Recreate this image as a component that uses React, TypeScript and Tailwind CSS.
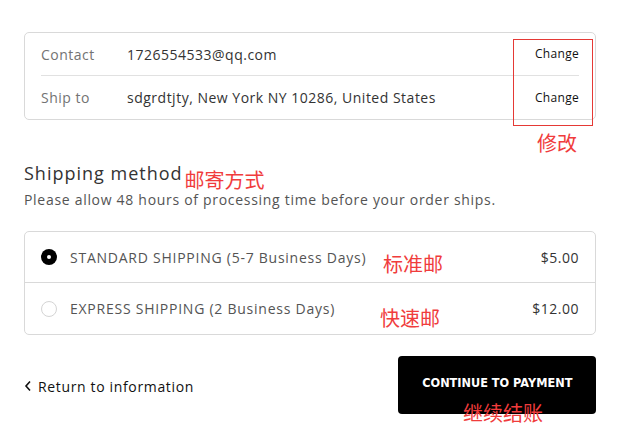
export default function App() {
  const rows = [
    { label: "Contact", value: "1726554533@qq.com" },
    { label: "Ship to", value: "sdgrdtjty, New York NY 10286, United States" },
  ]

  return (
    <div className="relative h-[434px] w-[634px] overflow-hidden bg-white text-[#333] tracking-[0.5px] [font-family:'Open_Sans','Noto_Sans_CJK_SC',sans-serif]">
      {/* breadcrumb, cut off at the top */}
      <div className="-mt-[14px] h-[14px] pl-[60px] text-[12px] leading-[14px] text-[#777]">
        Cart › Information › <span className="text-[#333]">Shipping</span> › Payment
      </div>

      <div className="ml-[24px] mt-[32px] w-[572px] rounded-[5px] border border-[#d9d9d9] px-[16px]">
        {rows.map((r, i) => (
          <div
            key={r.label}
            className={`flex h-[43px] items-center text-[14px] ${i === 0 ? "border-b border-[#e1e1e1]" : ""}`}
          >
            <span className="w-[86px] text-[#737373]">{r.label}</span>
            <span className="flex-1 text-[#333]">{r.value}</span>
            <span className="text-[12px] tracking-[0.3px] text-[#111]">Change</span>
          </div>
        ))}
      </div>

      <div className="ml-[24px] mt-[41px] w-[580px]">
        <div className="flex items-end">
          <h2 className="text-[18px] font-normal leading-[24px] tracking-[1px] text-[#333]">Shipping method</h2>
          <span className="relative top-[8px] ml-[2px] text-[20px] leading-[24px] tracking-normal text-[#f03c3c]">邮寄方式</span>
        </div>
        <p className="mt-[4px] text-[14px] tracking-[0.7px] text-[#545454]">
          Please allow 48 hours of processing time before your order ships.
        </p>
      </div>

      <div className="ml-[24px] mt-[21px] w-[572px] rounded-[5px] border border-[#d9d9d9]">
        <div className="relative flex h-[51px] items-center border-b border-[#d9d9d9] px-[16px] text-[14px]">
          <span className="mr-[13px] flex h-[16px] w-[16px] items-center justify-center rounded-full bg-black">
            <span className="h-[4px] w-[4px] rounded-full bg-white" />
          </span>
          <span className="flex-1 tracking-[0.75px] text-[#545454]">STANDARD SHIPPING (5-7 Business Days)</span>
          <span className="text-[#333]">$5.00</span>
          <span className="absolute left-[358px] top-[21px] text-[20px] leading-[24px] tracking-normal text-[#f03c3c]">标准邮</span>
        </div>
        <div className="relative flex h-[51px] items-center px-[16px] text-[14px]">
          <span className="mr-[13px] h-[16px] w-[16px] rounded-full border-[1.5px] border-[#d4d4d4]" />
          <span className="flex-1 tracking-[0.75px] text-[#545454]">EXPRESS SHIPPING (2 Business Days)</span>
          <span className="text-[#333]">$12.00</span>
          <span className="absolute left-[355px] top-[24px] text-[20px] leading-[24px] tracking-normal text-[#f03c3c]">快速邮</span>
        </div>
      </div>

      <div className="ml-[24px] mt-[21px] flex w-[572px] items-center justify-between">
        <span className="flex items-center gap-[6px] pt-[2px] text-[14px] tracking-[0.65px] text-[#111]">
          <svg width="8" height="12" viewBox="0 0 8 12" fill="none">
            <path d="M6 1.5 L2 6 L6 10.5" stroke="#111" strokeWidth="1.6" />
          </svg>
          Return to information
        </span>
        <button className="relative h-[58px] w-[198px] rounded-[4px] bg-black pb-[4px] text-[13px] font-black tracking-[0px] text-white [font-family:'DejaVu_Sans','Liberation_Sans',sans-serif]">
          <span className="inline-block scale-x-[0.87]">CONTINUE TO PAYMENT</span>
          <span className="absolute left-[65px] top-[45px] text-[20px] font-normal leading-[24px] text-[#f03c3c] [font-family:'Noto_Sans_CJK_SC',sans-serif]">
            继续结账
          </span>
        </button>
      </div>

      {/* annotation overlay */}
      <div className="absolute left-[513px] top-[39px] h-[87px] w-[80px] border border-[#e53935]" />
      <span className="absolute left-[537px] top-[132px] text-[20px] leading-[24px] tracking-normal text-[#f03c3c]">修改</span>
    </div>
  )
}
